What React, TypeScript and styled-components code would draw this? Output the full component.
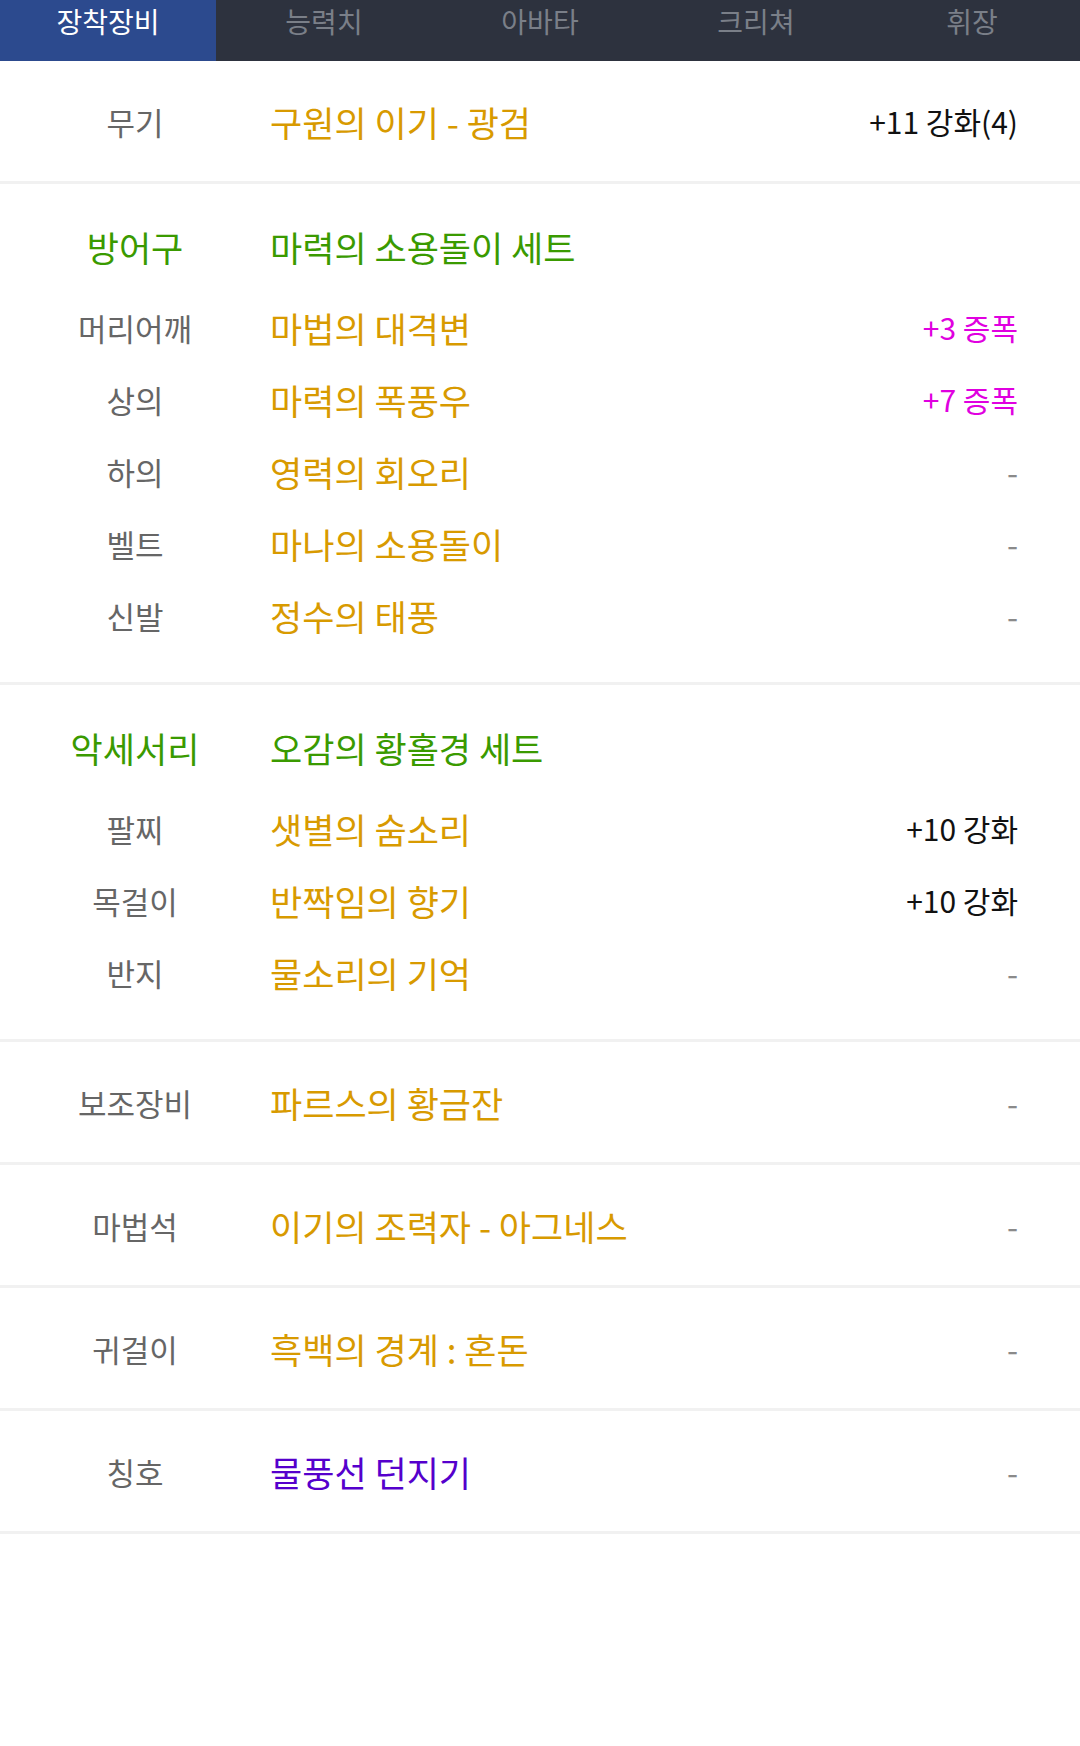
import React from "react";
import styled, { createGlobalStyle } from "styled-components";

const GlobalStyle = createGlobalStyle`
  body {
    margin: 0;
    background: #ffffff;
    font-family: "Noto Sans CJK KR", "Noto Sans", sans-serif;
  }
`;

type Tone = "gold" | "green" | "purple" | "black" | "magenta" | "dash";

const tones: Record<Tone, string> = {
  gold: "#d89a00",
  green: "#3a9a00",
  purple: "#5500cc",
  black: "#111111",
  magenta: "#e000e0",
  dash: "#8a8a8a",
};

interface Item {
  slot: string;
  name: string;
  tone?: Tone;
  value?: string;
  valueTone?: Tone;
}

interface Group {
  slot: string;
  setName: string;
  items: Item[];
}

const tabs = ["장착장비", "능력치", "아바타", "크리쳐", "휘장"];

const weapon: Item = { slot: "무기", name: "구원의 이기 - 광검", value: "+11 강화(4)", valueTone: "black" };

const armor: Group = {
  slot: "방어구",
  setName: "마력의 소용돌이 세트",
  items: [
    { slot: "머리어깨", name: "마법의 대격변", value: "+3 증폭", valueTone: "magenta" },
    { slot: "상의", name: "마력의 폭풍우", value: "+7 증폭", valueTone: "magenta" },
    { slot: "하의", name: "영력의 회오리" },
    { slot: "벨트", name: "마나의 소용돌이" },
    { slot: "신발", name: "정수의 태풍" },
  ],
};

const accessory: Group = {
  slot: "악세서리",
  setName: "오감의 황홀경 세트",
  items: [
    { slot: "팔찌", name: "샛별의 숨소리", value: "+10 강화", valueTone: "black" },
    { slot: "목걸이", name: "반짝임의 향기", value: "+10 강화", valueTone: "black" },
    { slot: "반지", name: "물소리의 기억" },
  ],
};

const singles: Item[] = [
  { slot: "보조장비", name: "파르스의 황금잔" },
  { slot: "마법석", name: "이기의 조력자 - 아그네스" },
  { slot: "귀걸이", name: "흑백의 경계 : 혼돈" },
  { slot: "칭호", name: "물풍선 던지기", tone: "purple" },
];

const EquipRow: React.FC<{ item: Item; tall?: boolean }> = ({ item, tall }) => (
  <Row $tall={tall}>
    <SlotLabel>{item.slot}</SlotLabel>
    <ItemName $tone={item.tone ?? "gold"}>{item.name}</ItemName>
    {item.value ? (
      <Value $tone={item.valueTone ?? "black"}>{item.value}</Value>
    ) : (
      <Dash>-</Dash>
    )}
  </Row>
);

const SetGroup: React.FC<{ group: Group }> = ({ group }) => (
  <GroupSection>
    <HeaderRow>
      <SetLabel>{group.slot}</SetLabel>
      <ItemName $tone="green">{group.setName}</ItemName>
    </HeaderRow>
    {group.items.map((it) => (
      <EquipRow key={it.slot} item={it} />
    ))}
  </GroupSection>
);

export default function App() {
  return (
    <Page>
      <GlobalStyle />
      <TabBar>
        {tabs.map((t, i) => (
          <Tab key={t} $active={i === 0}>
            {t}
          </Tab>
        ))}
      </TabBar>
      <Section>
        <EquipRow item={weapon} tall />
      </Section>
      <SetGroup group={armor} />
      <SetGroup group={accessory} />
      {singles.map((it) => (
        <Section key={it.slot}>
          <EquipRow item={it} tall />
        </Section>
      ))}
    </Page>
  );
}

const Page = styled.div`
  width: 1080px;
  min-height: 1746px;
  background: #ffffff;
`;

const TabBar = styled.nav`
  display: grid;
  grid-template-columns: repeat(5, 1fr);
  height: 61px;
  background: #2d323e;
`;

const Tab = styled.div<{ $active?: boolean }>`
  display: flex;
  justify-content: center;
  height: 61px;
  line-height: 42px;
  font-size: 28px;
  color: ${(p) => (p.$active ? "#ffffff" : "#7a7f88")};
  background: ${(p) => (p.$active ? "#2c4a8e" : "transparent")};
`;

const Section = styled.section`
  border-bottom: 3px solid #f1f1f1;
`;

const GroupSection = styled(Section)`
  padding: 26px 0 31px;
`;

const Row = styled.div<{ $tall?: boolean }>`
  display: grid;
  grid-template-columns: 270px 1fr auto;
  align-items: center;
  height: ${(p) => (p.$tall ? "120px" : "72px")};
  padding-right: 62px;
`;

const HeaderRow = styled(Row)`
  margin-bottom: 9px;
`;

const SlotLabel = styled.span`
  text-align: center;
  font-size: 31px;
  color: #666666;
`;

const SetLabel = styled(SlotLabel)`
  font-size: 35px;
  color: ${tones.green};
`;

const ItemName = styled.span<{ $tone: Tone }>`
  font-size: 35px;
  color: ${(p) => tones[p.$tone]};
  white-space: nowrap;
`;

const Value = styled.span<{ $tone: Tone }>`
  font-size: 30px;
  color: ${(p) => tones[p.$tone]};
  text-align: right;
  white-space: nowrap;
`;

const Dash = styled(Value).attrs({ $tone: "dash" as Tone })`
  font-size: 32px;
`;
